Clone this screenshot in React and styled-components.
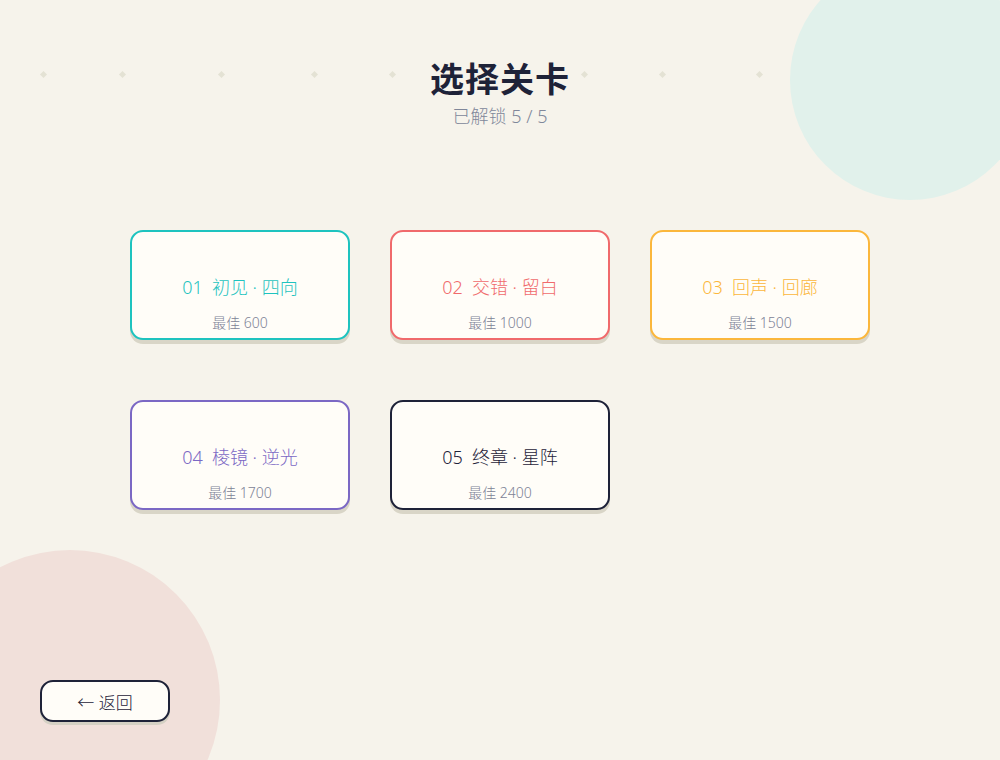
import React from "react";
import styled, { createGlobalStyle } from "styled-components";

const GlobalStyle = createGlobalStyle`
  html, body {
    margin: 0;
    padding: 0;
    background: #f6f3eb;
  }
  body {
    font-family: "Noto Sans", "Noto Sans CJK SC", sans-serif;
  }
`;

const levels = [
  { id: "01", name: "初见 · 四向", best: 600, color: "#1ec3bf" },
  { id: "02", name: "交错 · 留白", best: 1000, color: "#f06a6c" },
  { id: "03", name: "回声 · 回廊", best: 1500, color: "#fbb73c" },
  { id: "04", name: "棱镜 · 逆光", best: 1700, color: "#7b68c4" },
  { id: "05", name: "终章 · 星阵", best: 2400, color: "#1e2238" },
];

const dots = [44, 123, 222, 315, 393, 585, 663, 760];

const App = () => {
  return (
    <>
      <GlobalStyle />
      <Screen>
        <Blob $color="#e1f1eb" $size={240} style={{ left: 790, top: -40 }} />
        <Blob $color="#f1e0da" $size={300} style={{ left: -80, top: 550 }} />
        {dots.map((x) => (
          <Dot key={x} style={{ left: x - 3 }} />
        ))}

        <Header>
          <Title>选择关卡</Title>
          <Subtitle>已解锁 5 / 5</Subtitle>
        </Header>

        <Grid>
          {levels.map((lv) => (
            <Card key={lv.id} $color={lv.color}>
              <CardName $color={lv.color}>
                <span>{lv.id}</span>
                {lv.name}
              </CardName>
              <Best>最佳 {lv.best}</Best>
            </Card>
          ))}
        </Grid>

        <Footer>
          <BackButton>← 返回</BackButton>
        </Footer>
      </Screen>
    </>
  );
};

const Screen = styled.div`
  position: relative;
  width: 1000px;
  height: 760px;
  overflow: hidden;
  background: #f6f3eb;
  display: flex;
  flex-direction: column;
  align-items: center;
`;

const Blob = styled.div`
  position: absolute;
  width: ${(p) => p.$size}px;
  height: ${(p) => p.$size}px;
  border-radius: 50%;
  background: ${(p) => p.$color};
`;

const Dot = styled.div`
  position: absolute;
  top: 72px;
  width: 5px;
  height: 5px;
  background: #e4e2d4;
  transform: rotate(45deg);
`;

const Header = styled.div`
  position: relative;
  margin-top: 56px;
  display: flex;
  flex-direction: column;
  align-items: center;
`;

const Title = styled.h1`
  margin: 0;
  font-family: "Noto Sans CJK SC", sans-serif;
  font-size: 34px;
  line-height: 44px;
  font-weight: 700;
  color: #1e2238;
  letter-spacing: 1px;
`;

const Subtitle = styled.div`
  margin-top: 4px;
  font-size: 18px;
  line-height: 24px;
  font-weight: 300;
  color: #80879a;
`;

const Grid = styled.div`
  position: relative;
  margin-top: 102px;
  display: grid;
  grid-template-columns: repeat(3, 220px);
  column-gap: 40px;
  row-gap: 60px;
`;

const Card = styled.div`
  box-sizing: border-box;
  height: 110px;
  border: 2px solid ${(p) => p.$color};
  border-radius: 13px;
  background: #fffdf8;
  box-shadow: 0 4px 0 #d9d5c7;
  display: flex;
  flex-direction: column;
  align-items: center;
  padding-top: 43px;
  cursor: pointer;
`;

const CardName = styled.div`
  font-size: 18px;
  line-height: 24px;
  font-weight: 300;
  color: ${(p) => p.$color};

  span {
    margin-right: 9px;
  }
`;

const Best = styled.div`
  margin-top: 15px;
  font-size: 14px;
  line-height: 18px;
  font-weight: 300;
  color: #7d8296;
`;

const Footer = styled.div`
  position: relative;
  margin-top: auto;
  align-self: stretch;
  padding: 0 0 38px 40px;
`;

const BackButton = styled.button`
  box-sizing: border-box;
  width: 130px;
  height: 42px;
  border: 2px solid #1e2238;
  border-radius: 13px;
  background: #fffdf8;
  box-shadow: 0 3px 0 #d5d1c4;
  font-family: "Noto Sans", "Noto Sans CJK SC", sans-serif;
  font-size: 17px;
  font-weight: 300;
  color: #1e2238;
  cursor: pointer;
`;

export default App;
